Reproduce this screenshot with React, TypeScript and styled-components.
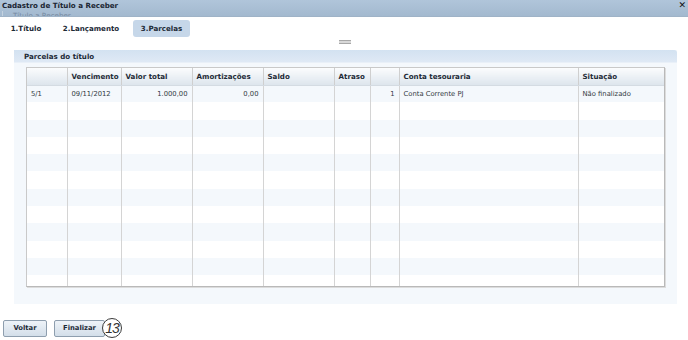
import React from "react";
import styled, { createGlobalStyle } from "styled-components";

const Global = createGlobalStyle`
  html, body { margin: 0; padding: 0; background: #ffffff; }
  body { font-family: "DejaVu Sans", Verdana, sans-serif; color: #1d2a36; }
`;

const Window = styled.div`
  width: 688px;
  height: 340px;
  display: flex;
  flex-direction: column;
  background: #ffffff;
  overflow: hidden;
`;

const TitleBar = styled.div`
  position: relative;
  height: 16px;
  flex: none;
  display: flex;
  align-items: flex-start;
  justify-content: space-between;
  padding: 0 2px 0 2px;
  background: linear-gradient(#b0c5da, #a3b9cf);
  border-bottom: 1px solid #9fb3c7;
  overflow: hidden;
`;

const Title = styled.span`
  font-size: 7.1px;
  font-weight: bold;
  line-height: 11px;
  color: #1a2532;
`;

const Ghost = styled.span`
  position: absolute;
  left: 2px;
  top: 11px;
  padding-left: 10px;
  border-left: 1px solid #c4d2df;
  font-size: 7.1px;
  line-height: 9px;
  color: #7689a0;
`;

const Close = styled.span`
  font-size: 9px;
  font-weight: bold;
  line-height: 10px;
  color: #111;
`;

const Tabs = styled.div`
  display: flex;
  align-items: center;
  padding: 3px 0 0 3px;
  height: 17px;
  flex: none;
`;

const Tab = styled.div<{ $active?: boolean; $w: number }>`
  width: ${(p) => p.$w}px;
  height: 17px;
  display: flex;
  align-items: center;
  justify-content: center;
  border-radius: 3px;
  font-size: 7.1px;
  font-weight: bold;
  color: #1d2a36;
  background: ${(p) => (p.$active ? "#c6d7e9" : "transparent")};
`;

const GripRow = styled.div`
  display: flex;
  justify-content: center;
  padding: 3px 0 0 0;
  height: 10px;
  flex: none;
`;

const Grip = styled.div`
  width: 12px;
  height: 2px;
  border-top: 1px solid #a8a8a8;
  border-bottom: 1px solid #a8a8a8;
  background: #d8d8d8;
  margin-left: 2px;
`;

const Panel = styled.div`
  margin: 0 11px 0 14px;
  height: 254px;
  flex: none;
  display: flex;
  flex-direction: column;
  background: #f4f8fc;
`;

const PanelHeader = styled.div`
  height: 12px;
  flex: none;
  padding-left: 10px;
  display: flex;
  align-items: center;
  font-size: 7.1px;
  font-weight: bold;
  color: #1d2a36;
  background: linear-gradient(#d3e2f1, #dfe9f5);
  border-top-right-radius: 3px;
  border-bottom: 1px solid #e9f0f8;
`;

const TableBox = styled.div`
  margin: 4px 12px 0 12px;
  height: 218px;
  overflow: hidden;
  background: #ffffff;
  border: 1px solid #c9c9c9;
  border-right-color: #b9b9b9;
  border-bottom-color: #b9b9b9;
  box-shadow: 1px 1px 0 #dcdcdc;
`;

const Grid = styled.table`
  border-collapse: collapse;
  table-layout: fixed;
  width: 100%;
`;

const Th = styled.th<{ $w: number }>`
  box-sizing: border-box;
  width: ${(p) => p.$w}px;
  height: 17px;
  padding: 0 4px;
  text-align: left;
  font-size: 7.1px;
  font-weight: bold;
  color: #1d2a36;
  background: linear-gradient(#fbfcfd, #e6ecf2 70%, #dde5ec);
  border-left: 1px solid #cfcfcf;
  border-bottom: 1px solid #d4dbe2;
  white-space: nowrap;
  overflow: hidden;
  &:first-child { border-left: none; }
`;

const Tr = styled.tr<{ $alt: boolean }>`
  height: 17.3px;
  background: ${(p) => (p.$alt ? "#f4f8fc" : "#ffffff")};
`;

const Td = styled.td<{ $right?: boolean }>`
  padding: 0 4px;
  font-size: 6.8px;
  color: #333a42;
  text-align: ${(p) => (p.$right ? "right" : "left")};
  border-left: 1px solid #d4d4d4;
  white-space: nowrap;
  overflow: hidden;
  &:first-child { border-left: none; }
`;

const Footer = styled.div`
  display: flex;
  align-items: center;
  padding: 14px 0 0 3px;
  gap: 7px;
`;

const Button = styled.button<{ $w: number }>`
  width: ${(p) => p.$w}px;
  height: 17px;
  padding: 0;
  border: 1px solid #8e9eae;
  border-radius: 2px;
  background: linear-gradient(#eef3f8, #d3dee9);
  font-family: "DejaVu Sans", Verdana, sans-serif;
  font-size: 6.8px;
  font-weight: bold;
  color: #1d2a36;
`;

const Group = styled.div`
  display: flex;
  align-items: center;
`;

const Badge = styled.div`
  margin-left: -3px;
  width: 18px;
  height: 18px;
  border: 1.5px solid #3a3a3a;
  border-radius: 50%;
  background: #ffffff;
  display: flex;
  align-items: center;
  justify-content: center;
  font-family: "Liberation Sans", Arial, sans-serif;
  font-size: 14px;
  font-style: italic;
  letter-spacing: -1px;
  color: #333;
`;

const cols = [
  { label: "", w: 40 },
  { label: "Vencimento", w: 54 },
  { label: "Valor total", w: 71 },
  { label: "Amortizações", w: 71 },
  { label: "Saldo", w: 71 },
  { label: "Atraso", w: 36 },
  { label: "", w: 29 },
  { label: "Conta tesouraria", w: 179 },
  { label: "Situação", w: 86 },
];

const first = ["5/1", "09/11/2012", "1.000,00", "0,00", "", "", "1", "Conta Corrente PJ", "Não finalizado"];
const rightCols = [2, 3, 6];

export default function App() {
  const rows = Array.from({ length: 12 }, (_, i) => (i === 0 ? first : cols.map(() => "")));
  return (
    <Window>
      <Global />
      <TitleBar>
        <Title>Cadastro de Título a Receber</Title>
        <Close>✕</Close>
        <Ghost>Título a Receber</Ghost>
      </TitleBar>
      <Tabs>
        <Tab $w={46}>1.Título</Tab>
        <Tab $w={84}>2.Lançamento</Tab>
        <Tab $w={57} $active>3.Parcelas</Tab>
      </Tabs>
      <GripRow>
        <Grip />
      </GripRow>
      <Panel>
        <PanelHeader>Parcelas do título</PanelHeader>
        <TableBox>
          <Grid>
            <thead>
              <tr>
                {cols.map((c, i) => (
                  <Th key={i} $w={c.w}>{c.label}</Th>
                ))}
              </tr>
            </thead>
            <tbody>
              {rows.map((r, i) => (
                <Tr key={i} $alt={i % 2 === 0}>
                  {r.map((v, j) => (
                    <Td key={j} $right={rightCols.includes(j)}>{v}</Td>
                  ))}
                </Tr>
              ))}
            </tbody>
          </Grid>
        </TableBox>
      </Panel>
      <Footer>
        <Button $w={44}>Voltar</Button>
        <Group>
          <Button $w={51}>Finalizar</Button>
          <Badge>13</Badge>
        </Group>
      </Footer>
    </Window>
  );
}
